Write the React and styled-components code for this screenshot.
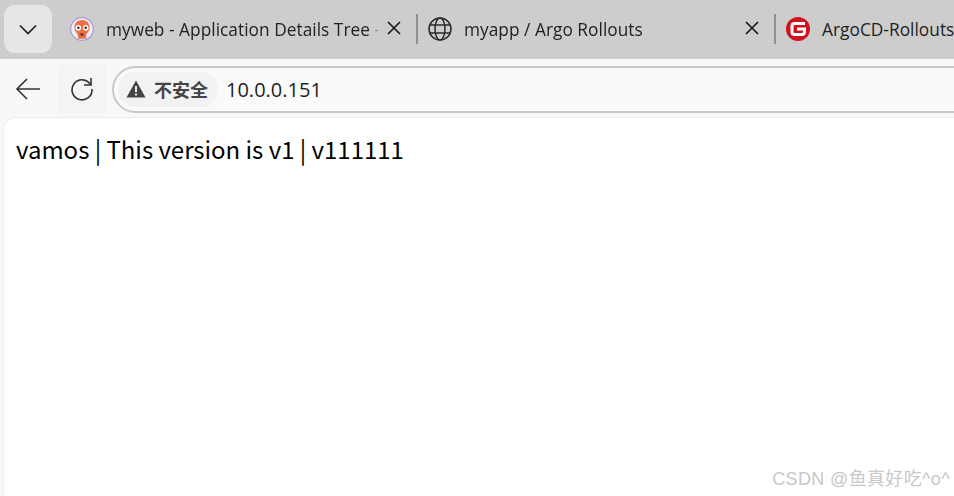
import React from 'react';
import styled, { createGlobalStyle } from 'styled-components';

const GlobalStyle = createGlobalStyle`
	html, body {
		margin: 0;
		padding: 0;
		height: 100%;
		overflow: hidden;
		background: #f8f8f8;
	}
	#root {
		height: 100%;
	}
`;

const tabs = [
	{ title: 'myweb - Application Details Tree -', icon: 'argo' },
	{ title: 'myapp / Argo Rollouts', icon: 'globe' },
	{ title: 'ArgoCD-Rollouts', icon: 'gitee', last: true },
];

const App = () => (
	<Window>
		<GlobalStyle />
		<TabStrip>
			<ExpandButton>
				<svg width="24" height="24" viewBox="0 0 24 24" fill="none" stroke="#1f1f1f" strokeWidth="1.7">
					<path d="M4 8.5l8 8 8-8" />
				</svg>
			</ExpandButton>
			{tabs.map(tab => (
				<Tab key={tab.title} $last={tab.last}>
					<Favicon>
						{tab.icon === 'argo' && <ArgoIcon />}
						{tab.icon === 'globe' && <GlobeIcon />}
						{tab.icon === 'gitee' && <GiteeIcon />}
					</Favicon>
					<TabTitle $last={tab.last}>{tab.title}</TabTitle>
					{!tab.last && (
						<CloseIcon width="16" height="16" viewBox="0 0 16 16" stroke="#1c1c1c" strokeWidth="1.7">
							<path d="M2 2l12 12M14 2L2 14" />
						</CloseIcon>
					)}
				</Tab>
			))}
		</TabStrip>
		<Toolbar>
			<BackButton>
				<svg width="28" height="28" viewBox="0 0 28 28" fill="none" stroke="#333" strokeWidth="1.6">
					<path d="M26 14H3M13 4L3 14l10 10" />
				</svg>
			</BackButton>
			<ReloadButton>
				<svg width="24" height="24" viewBox="0 0 24 24" fill="none" stroke="#333" strokeWidth="1.6">
					<path d="M20.5 7.500A10 10 0 1 0 22 12" />
					<path d="M21 1v7h-7" />
				</svg>
			</ReloadButton>
			<AddressBar>
				<SecurityChip>
					<svg width="20" height="18" viewBox="0 0 20 18">
						<path fill="#444" d="M10 0.5L19.5 17.5H0.5z" />
						<path fill="#f1f1f1" d="M9 6h2v6H9zM9 13.4h2v2H9z" />
					</svg>
					<SecurityText>不安全</SecurityText>
				</SecurityChip>
				<Url>10.0.0.151</Url>
			</AddressBar>
		</Toolbar>
		<Page>
			<PageText>vamos | This version is v1 | v111111</PageText>
			<Watermark>CSDN @鱼真好吃^o^</Watermark>
		</Page>
	</Window>
);

const ArgoIcon = () => (
	<svg width="24" height="24" viewBox="0 0 24 24">
		<circle cx="12" cy="12" r="11.300" fill="#efedf7" stroke="#a99fd6" strokeWidth="1.200" />
		<path fill="#ee6f43" d="M12 3c4.700 0 7.600 3.200 7.600 7.200 0 3-1.200 5-3 6.300l-.9 5.200H8.300l-.9-5.200c-1.800-1.300-3-3.300-3-6.300C4.400 6.200 7.300 3 12 3z" />
		<circle cx="8.300" cy="10.800" r="2.800" fill="#fff" />
		<circle cx="15.700" cy="10.800" r="2.800" fill="#fff" />
		<circle cx="8.300" cy="10.800" r="1.300" fill="#333" />
		<circle cx="15.700" cy="10.800" r="1.300" fill="#333" />
		<path fill="#5a2b1e" d="M10.300 16.500h3.400l-.6 2.200h-2.200z" />
	</svg>
);

const GlobeIcon = () => (
	<svg width="24" height="24" viewBox="0 0 24 24" fill="none" stroke="#2a2a2a" strokeWidth="1.500">
		<circle cx="12" cy="12" r="11" />
		<ellipse cx="12" cy="12" rx="5" ry="11" />
		<path d="M2 8h20M2 16h20" />
	</svg>
);

const GiteeIcon = () => (
	<svg width="24" height="24" viewBox="0 0 24 24">
		<circle cx="12" cy="12" r="12" fill="#d0121e" />
		<path fill="none" stroke="#fff" strokeWidth="3" d="M19 6.500H8.500A2.500 2.500 0 0 0 6 9v6a2.500 2.500 0 0 0 2.500 2.500H16a2.500 2.500 0 0 0 2.500-2.500v-3H11" />
	</svg>
);

const Window = styled.div`
	width: 954px;
	height: 496px;
	display: flex;
	flex-direction: column;
	overflow: hidden;
	font-family: 'Open Sans', 'Noto Sans CJK SC', sans-serif;
`;

const TabStrip = styled.div`
	height: 59px;
	flex: none;
	display: flex;
	align-items: flex-start;
	padding: 5px 0 0 4px;
	box-sizing: border-box;
	background: #cdcdcd;
`;

const ExpandButton = styled.div`
	width: 48px;
	height: 48px;
	flex: none;
	margin-right: 8px;
	display: flex;
	align-items: center;
	justify-content: center;
	border-radius: 11px;
	background: #e6e6e6;
`;

const Tab = styled.div`
	width: 358px;
	height: 30px;
	flex: none;
	margin-top: 9px;
	padding: 0 14px 0 10px;
	box-sizing: border-box;
	display: flex;
	align-items: center;
	border-right: ${props => (props.$last ? 'none' : '2px solid #8f8f8f')};
`;

const Favicon = styled.div`
	width: 24px;
	height: 24px;
	flex: none;
	margin-right: 12px;
	display: flex;
`;

const TabTitle = styled.div`
	flex: 1;
	min-width: 0;
	white-space: nowrap;
	font-size: 17.300px;
	line-height: 30px;
	padding-top: 2px;
	letter-spacing: 0.03px;
	color: #1f1f1f;
	${props => !props.$last && 'mask-image: linear-gradient(to right, #000 262px, transparent 275px);'}
`;

const CloseIcon = styled.svg`
	flex: none;
	margin-left: 8px;
	margin-top: -2px;
`;

const Toolbar = styled.div`
	height: 59px;
	flex: none;
	display: flex;
	align-items: center;
	padding: 1px 0 0 14px;
	box-sizing: border-box;
	background: #f8f8f8;
`;

const BackButton = styled.div`
	width: 28px;
	height: 28px;
	flex: none;
	margin-right: 16px;
`;

const ReloadButton = styled.div`
	width: 48px;
	height: 48px;
	flex: none;
	margin-right: 6px;
	display: flex;
	align-items: center;
	justify-content: center;
	border-radius: 4px;
	background: #f4f4f4;
`;

const AddressBar = styled.div`
	flex: none;
	width: 900px;
	height: 47px;
	display: flex;
	align-items: center;
	padding-left: 4px;
	box-sizing: border-box;
	border: 2px solid #c9c9c9;
	border-radius: 24px;
	background: #fafafa;
`;

const SecurityChip = styled.div`
	height: 35px;
	width: 100px;
	flex: none;
	margin-right: 8px;
	display: flex;
	align-items: center;
	padding-left: 8px;
	box-sizing: border-box;
	border-radius: 18px;
	background: #f2f2f2;
`;

const SecurityText = styled.span`
	margin-left: 8px;
	font-family: 'Noto Sans CJK SC', sans-serif;
	font-size: 18px;
	font-weight: 700;
	color: #444;
`;

const Url = styled.span`
	font-size: 20px;
	color: #1f1f1f;
`;

const Page = styled.div`
	flex: 1;
	position: relative;
	margin-left: 4px;
	padding: 13px 0 0 12px;
	border-top-left-radius: 12px;
	background: #fff;
	box-shadow: 0 0 0 1px #ececec;
`;

const PageText = styled.div`
	font-family: 'Noto Sans CJK SC', 'Noto Sans', sans-serif;
	font-size: 24px;
	line-height: 36px;
	letter-spacing: -0.03px;
	color: #000;
`;

const Watermark = styled.div`
	position: absolute;
	right: 4px;
	bottom: 6px;
	font-family: 'Liberation Sans', 'Noto Sans CJK SC', sans-serif;
	font-size: 18px;
	letter-spacing: 0.35px;
	color: #c8c8c8;
	white-space: nowrap;
`;

export default App;
